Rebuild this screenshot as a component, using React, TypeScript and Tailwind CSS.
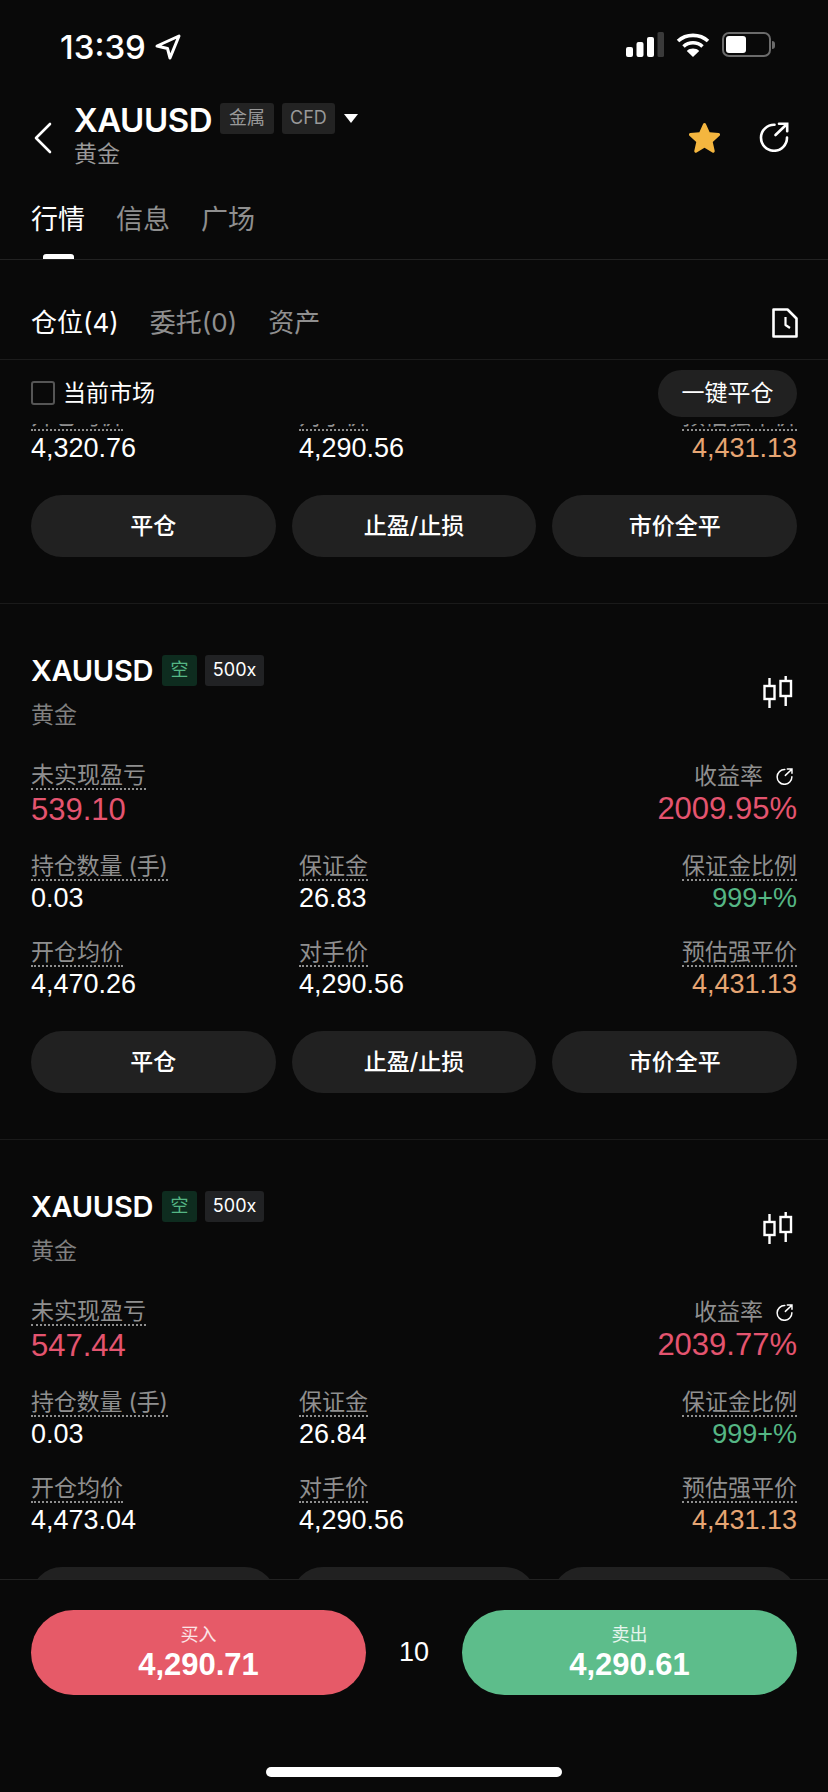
const positions = [
  { pnl: "", rate: "", size: "", margin: "", ratio: "", open: "4,320.76" },
  { pnl: "539.10", rate: "2009.95%", size: "0.03", margin: "26.83", ratio: "999+%", open: "4,470.26" },
  { pnl: "547.44", rate: "2039.77%", size: "0.03", margin: "26.84", ratio: "999+%", open: "4,473.04" },
];

function ShareIcon({ className }: { className: string }) {
  return (
    <svg viewBox="0 0 30 30" fill="none" stroke="currentColor" strokeWidth="2.6" strokeLinecap="round" className={className}>
      <path d="M15.500 2.800A13 13 0 1 0 28 15.500" />
      <path d="M16.500 13 27.500 2.500M20 1.800h8.200v7.500" />
    </svg>
  );
}

function CandleIcon() {
  return (
    <svg viewBox="0 0 30 32" fill="none" stroke="white" strokeWidth="2.4" className="w-[30px] h-[32px]">
      <path d="M6.500 2v8M6.500 23v9M22.700 0v5M22.700 20v10" />
      <rect x="1.500" y="10" width="10" height="13" />
      <rect x="17.500" y="5" width="10.500" height="15" />
    </svg>
  );
}

function StatusBar() {
  return (
    <div className="h-[80px] shrink-0 flex items-start justify-between pt-[31px] pl-[60px] pr-[53px] text-white">
      <div className="flex items-center gap-[9px]">
        <span className="text-[33px] leading-[32px] font-medium">13:39</span>
        <svg viewBox="0 0 26 26" className="w-[26px] h-[26px]" fill="none" stroke="white" strokeWidth="3" strokeLinejoin="round">
          <path d="M2 12 24 2 15 24l-2.500-9.500z" />
        </svg>
      </div>
      <div className="flex items-center gap-[12px] h-[27px]">
        <svg viewBox="0 0 38 25" className="w-[38px] h-[25px]">
          <rect x="0" y="15" width="7" height="10" rx="2" fill="white" />
          <rect x="10.500" y="10" width="7" height="15" rx="2" fill="white" />
          <rect x="21" y="5" width="7" height="20" rx="2" fill="white" />
          <rect x="31.500" y="0" width="6.500" height="25" rx="1.500" fill="#3a3a3a" />
        </svg>
        <svg viewBox="0 0 34 25" className="w-[34px] h-[25px]" fill="none" stroke="white" strokeWidth="3.600">
          <path d="M2 9C10 1.500 24 1.500 32 9M7.500 14.500C13 9.500 21 9.500 26.500 14.500" />
          <path d="M17 25 10.800 19C14 15.800 20 15.800 23.200 19z" fill="white" stroke="none" />
        </svg>
        <div className="flex items-center gap-[1px]">
          <div className="w-[49px] h-[25px] rounded-[7px] border-2 border-[#6b6b6b] p-[2px]">
            <div className="w-[20px] h-full rounded-[3px] bg-white" />
          </div>
          <div className="w-[3px] h-[8px] rounded-r-full bg-[#6b6b6b]" />
        </div>
      </div>
    </div>
  );
}

function Header() {
  return (
    <div className="h-[100px] shrink-0 flex items-start text-white">
      <svg viewBox="0 0 20 32" fill="none" stroke="white" strokeWidth="2.600" strokeLinecap="round" strokeLinejoin="round" className="w-[20px] h-[32px] ml-[33px] mt-[42px] shrink-0">
        <path d="M17 2 3 16l14 14" />
      </svg>
      <div className="ml-[21px] flex flex-col">
        <div className="flex items-center h-[40px] mt-[20px]">
          <span className="text-[33px] leading-[40px] font-semibold tracking-[-0.5px]">XAUUSD</span>
          <span className="ml-[8px] mb-[3px] h-[31px] w-[54px] rounded-[3px] bg-[#232323] text-[#999999] text-[18px] leading-[29px] text-center">金属</span>
          <span className="ml-[8px] mb-[3px] h-[31px] w-[53px] rounded-[3px] bg-[#232323] text-[#999999] text-[18px] leading-[29px] text-center">CFD</span>
          <div className="ml-[9px] mb-[3px] w-0 h-0 border-x-[7px] border-x-transparent border-t-[9px] border-t-white" />
        </div>
        <span className="text-[23px] leading-[28px] text-[#999999]">黄金</span>
      </div>
      <div className="ml-auto mr-[39px] mt-[41px] flex items-center gap-[38px]">
        <svg viewBox="0 0 34 32" className="w-[33px] h-[32px]" fill="#f4b63f">
          <path d="M17 1.500c.7 0 1.200.4 1.500 1l3.800 8.500 9.300 1c1.400.2 1.900 1.900.9 2.800l-7 6.300 2 9.100c.3 1.400-1.200 2.400-2.400 1.700L17 27.200l-8.100 4.700c-1.200.7-2.700-.3-2.400-1.700l2-9.100-7-6.300c-1-.9-.5-2.600.9-2.800l9.300-1 3.800-8.500c.3-.6.8-1 1.500-1z" />
        </svg>
        <ShareIcon className="w-[30px] h-[30px] text-white" />
      </div>
    </div>
  );
}

function Tabs() {
  return (
    <div className="h-[80px] shrink-0 border-b border-[#222222] flex gap-[31px] pl-[31px] pt-[25px] text-[27px] leading-[30px] text-[#8f8f8f]">
      <div className="relative h-full text-white">
        行情
        <div className="absolute left-[12px] bottom-0 w-[31px] h-[5px] rounded-t-[3px] bg-white" />
      </div>
      <div>信息</div>
      <div>广场</div>
    </div>
  );
}

function SubTabs() {
  return (
    <div className="h-[100px] shrink-0 border-b border-[#1c1c1c] flex items-center pt-[26px] pl-[31px] pr-[30px] text-[26px] text-[#8f8f8f]">
      <span className="text-white">仓位(4)</span>
      <span className="ml-[31px]">委托(0)</span>
      <span className="ml-[31px]">资产</span>
      <svg viewBox="0 0 26 30" fill="none" stroke="white" strokeWidth="2.600" strokeLinejoin="round" className="ml-auto w-[26px] h-[30px]">
        <path d="M1.500 1.500h14l9 9V28.500h-23z" />
        <path d="M13.500 9v8l4.500 3" strokeWidth="2.200" />
      </svg>
    </div>
  );
}

function Filter() {
  return (
    <div className="h-[64px] shrink-0 flex items-center pl-[31px] pr-[31px] pt-[2px] text-white text-[23px]">
      <div className="w-[24px] h-[24px] rounded-[3px] border-2 border-[#555555]" />
      <span className="ml-[8px]">当前市场</span>
      <div className="ml-auto h-[47px] w-[139px] rounded-full bg-[#212121] flex items-center justify-center">一键平仓</div>
    </div>
  );
}

function Label({ text, tight }: { text: string; tight?: boolean }) {
  return (
    <div className={`h-[30px] text-[23px] leading-[27px] text-[#8f8f8f] ${tight ? "tracking-[-0.2px]" : ""}`}>
      <span className="inline-block h-[28px] border-b-2 border-dotted border-[#8f8f8f]">{text}</span>
    </div>
  );
}

const num = "font-['Liberation_Sans',sans-serif]";

function PositionCard({ p }: { p: (typeof positions)[number] }) {
  return (
    <div className="h-[536px] border-t border-[#1a1a1a] px-[31px] text-white">
      <div className="flex items-start justify-between mt-[50px] h-[34px]">
        <div className="flex items-center">
          <span className="text-[29px] leading-[34px] font-semibold tracking-[-0.3px]">XAUUSD</span>
          <span className="ml-[9px] mb-[1px] w-[35px] h-[31px] rounded-[3px] bg-[#0e2c1f] text-[#55b684] text-[18px] leading-[29px] text-center">空</span>
          <span className="ml-[8px] mb-[1px] w-[59px] h-[31px] rounded-[3px] bg-[#212224] text-white text-[18px] leading-[29px] text-center">500x</span>
        </div>
        <div className="mt-[22px] mr-[4px]"><CandleIcon /></div>
      </div>
      <div className="mt-[12px] h-[30px] text-[23px] leading-[30px] text-[#808080]">黄金</div>
      <div className="mt-[32px] h-[64px] flex justify-between">
        <div>
          <Label text="未实现盈亏" />
          <div className={`${num} mt-[1px] text-[31px] leading-[34px] text-[#e4546f]`}>{p.pnl}</div>
        </div>
        <div className="flex flex-col items-end">
          <div className="h-[29px] flex items-center text-[23px] leading-[27px] text-[#8f8f8f] mr-[4px]">
            收益率
            <ShareIcon className="ml-[13px] w-[17px] h-[17px] text-white" />
          </div>
          <div className={`${num} mt-[2px] text-[31px] leading-[34px] text-[#e4546f]`}>{p.rate}</div>
        </div>
      </div>
      <div className="mt-[27px] h-[60px] grid grid-cols-[268px_1fr_auto]">
        <div>
          <Label text="持仓数量 (手)" tight />
          <div className={`${num} text-[27px] leading-[30px]`}>{p.size}</div>
        </div>
        <div>
          <Label text="保证金" />
          <div className={`${num} text-[27px] leading-[30px]`}>{p.margin}</div>
        </div>
        <div className="text-right">
          <Label text="保证金比例" />
          <div className={`${num} text-[27px] leading-[30px] text-[#55b684]`}>{p.ratio}</div>
        </div>
      </div>
      <div className="mt-[26px] h-[60px] grid grid-cols-[268px_1fr_auto]">
        <div>
          <Label text="开仓均价" />
          <div className={`${num} text-[27px] leading-[30px]`}>{p.open}</div>
        </div>
        <div>
          <Label text="对手价" />
          <div className={`${num} text-[27px] leading-[30px]`}>4,290.56</div>
        </div>
        <div className="text-right">
          <Label text="预估强平价" />
          <div className={`${num} text-[27px] leading-[30px] text-[#e6a573]`}>4,431.13</div>
        </div>
      </div>
      <div className="mt-[32px] grid grid-cols-3 gap-[16px] text-[23px] font-medium">
        <div className="h-[62px] rounded-full bg-[#212121] flex items-center justify-center">平仓</div>
        <div className="h-[62px] rounded-full bg-[#212121] flex items-center justify-center">止盈/止损</div>
        <div className="h-[62px] rounded-full bg-[#212121] flex items-center justify-center">市价全平</div>
      </div>
    </div>
  );
}

function TradeBar() {
  return (
    <div className="h-[213px] shrink-0 border-t border-[#222222] bg-[#090909] flex flex-col items-center text-white">
      <div className="w-full px-[31px] pt-[30px] flex items-center">
        <div className="w-[335px] h-[85px] rounded-full bg-[#e65a68] flex flex-col items-center justify-center">
          <span className="text-[18px] leading-[24px] text-white/85">买入</span>
          <span className={`${num} text-[31px] leading-[36px] font-bold`}>4,290.71</span>
        </div>
        <span className={`${num} flex-1 text-center text-[27px]`}>10</span>
        <div className="w-[335px] h-[85px] rounded-full bg-[#5dbd8b] flex flex-col items-center justify-center">
          <span className="text-[18px] leading-[24px] text-white/85">卖出</span>
          <span className={`${num} text-[31px] leading-[36px] font-bold`}>4,290.61</span>
        </div>
      </div>
      <div className="mt-[72px] w-[296px] h-[10px] rounded-full bg-white" />
    </div>
  );
}

export default function App() {
  return (
    <div className="w-[828px] h-[1792px] flex flex-col overflow-hidden bg-[#090909] font-['Inter','Noto_Sans_CJK_SC',sans-serif]">
      <StatusBar />
      <Header />
      <Tabs />
      <SubTabs />
      <Filter />
      <div className="flex-1 min-h-0 overflow-hidden">
        <div className="mt-[-357px]">
          {positions.map((p, i) => (
            <PositionCard key={i} p={p} />
          ))}
        </div>
      </div>
      <TradeBar />
    </div>
  );
}
